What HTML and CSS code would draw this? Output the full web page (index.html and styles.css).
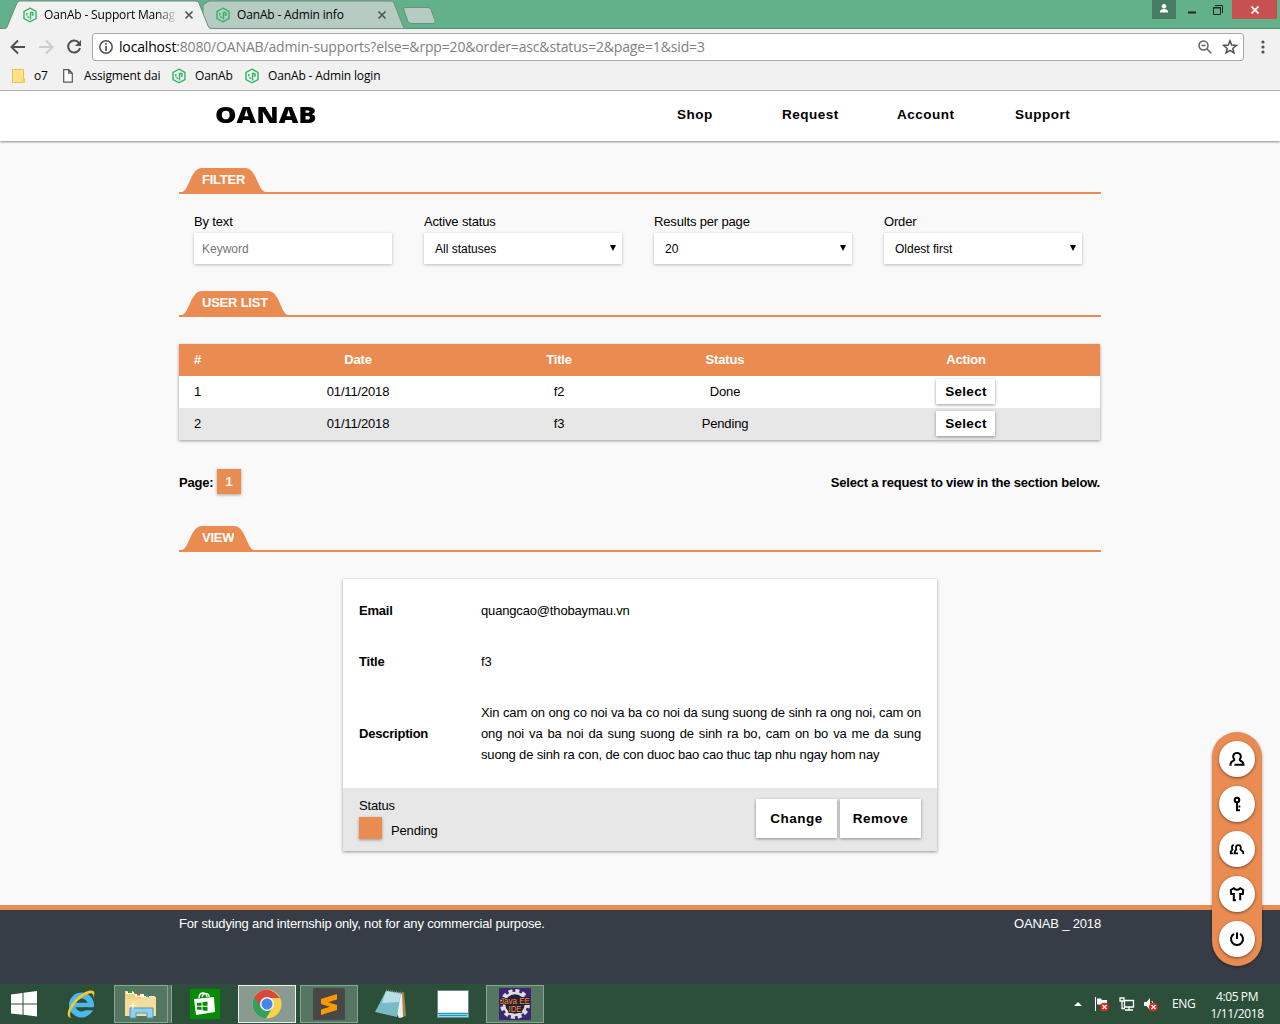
FILE: index.html
```html
<!DOCTYPE html>
<html lang="en">
<head>
<meta charset="utf-8">
<title>OanAb - Support Manager</title>
<link rel="stylesheet" href="styles.css">
</head>
<body>
<svg class="defs" width="0" height="0">
  <defs>
    <symbol id="logo" viewBox="0 0 16 16"><path d="M8 1.200 14 4.400v7.200L8 14.800 2 11.600V4.400Z" fill="none" stroke="#2eb563" stroke-width="1.400"/><path d="M4.800 6v2.500M5.300 9.500 7 10.800M8.500 12.500V5M8.500 5.300l2.500.5v2.200l-1.200.3" fill="none" stroke="#2eb563" stroke-width="1.400"/></symbol>
    <symbol id="close" viewBox="0 0 10 10"><path d="m1.500 1.500 7 7M8.500 1.500l-7 7" stroke="#555" stroke-width="1.700"/></symbol>
    <symbol id="cap-left" viewBox="0 0 20 24"><path d="M0 24C7.500 22 8.500 0 20 0V24Z" fill="#ea8c52"/></symbol>
    <symbol id="cap-right" viewBox="0 0 20 24"><path d="M20 24C12.500 22 11.500 0 0 0V24Z" fill="#ea8c52"/></symbol>
    <symbol id="badge" viewBox="0 0 9 9"><circle cx="4.500" cy="4.500" r="4.500" fill="#d9281e"/><path d="m2.500 2.500 4 4M6.500 2.500l-4 4" stroke="#fff" stroke-width="1.400"/></symbol>
  </defs>
</svg>

<div class="tabstrip">
  <svg class="tab-shapes" width="440" height="29" viewBox="0 0 440 29">
    <path d="M203 28.500V5l6-4h182q2 0 3 2l9 23q1 2.500 3 2.500Z" fill="#b6cbc1" stroke="#6d8f7e"/>
    <path d="M405 7.500h23q2 0 3 2l4 11q1 3-2 3h-21q-3 0-4-2l-4-11q-1-3 1-3Z" fill="#b6cbc1" stroke="#6d8f7e"/>
    <path d="M0 29h5q2 0 3-3L17 3q1-2 3-2h175q3 0 4 2l9 23q1 3 4 3Z" fill="#f1f1f1"/>
    <path d="M0 28.500h4q2 0 3-2L17 3q1-2 3-2h175q3 0 4 2l9 23q1 2.500 4 2.500" fill="none" stroke="#6d8f7e"/>
  </svg>
  <div class="tab tab-active"><svg width="16" height="16"><use href="#logo"/></svg><span class="tab-title">OanAb - Support Manag</span><svg width="10" height="10"><use href="#close"/></svg></div>
  <div class="tab"><svg width="16" height="16"><use href="#logo"/></svg><span class="tab-title">OanAb - Admin info</span><svg width="10" height="10"><use href="#close"/></svg></div>
  <div class="win-buttons">
    <span class="wb wb-user"><svg width="10" height="9" viewBox="0 0 10 9"><circle cx="5" cy="2.300" r="2.200" fill="#fff"/><path d="M1 8.500V7q1-2 4-2t4 2v1.500Z" fill="#fff"/></svg></span>
    <span class="wb wb-min"><svg width="8" height="3"><path d="M0 1.500h8" stroke="#222" stroke-width="2"/></svg></span>
    <span class="wb wb-max"><svg width="10" height="10" viewBox="0 0 10 10"><path d="M.5 2.500h7v7h-7ZM0 3h8M2 .5h7.500V8" fill="none" stroke="#222"/></svg></span>
    <span class="wb wb-close"><svg width="8" height="8" viewBox="0 0 8 8"><path d="m.5.5 7 7M7.500.5l-7 7" stroke="#fff" stroke-width="1.700"/></svg></span>
  </div>
</div>

<div class="toolbar">
  <svg class="nav" width="92" height="36" viewBox="0 0 92 36">
    <path d="M25 18H12M18 11.500 11.500 18l6.500 6.500" fill="none" stroke="#505050" stroke-width="2"/>
    <path d="M39 18h13M46 11.500l6.500 6.500-6.500 6.500" fill="none" stroke="#ccc" stroke-width="2"/>
    <path d="M79 14a6 6 0 1 0 1 5" fill="none" stroke="#505050" stroke-width="2"/><path d="M81 11v6h-6Z" fill="#505050"/>
  </svg>
  <div class="omnibox">
    <svg width="14" height="14" viewBox="0 0 14 14"><circle cx="7" cy="7" r="6.200" fill="none" stroke="#505050" stroke-width="1.500"/><path d="M7 3v1.800M7 6v5" stroke="#505050" stroke-width="1.700"/></svg>
    <span class="url"><b>localhost</b>:8080/OANAB/admin-supports?else=&amp;rpp=20&amp;order=asc&amp;status=2&amp;page=1&amp;sid=3</span>
    <svg width="14" height="14" viewBox="0 0 14 14"><circle cx="5.500" cy="5.500" r="4.500" fill="none" stroke="#606060" stroke-width="1.500"/><path d="M3.500 5.500h4M9 9l4.300 4.300" stroke="#606060" stroke-width="1.600"/></svg>
    <svg class="star" width="16" height="16" viewBox="0 0 16 16"><path d="m8 1.800 1.700 4.300 4.700.3-3.600 3 1.200 4.500L8 11.400l-4 2.500 1.200-4.500-3.600-3 4.700-.3Z" fill="none" stroke="#505050" stroke-width="1.500"/></svg>
  </div>
  <svg class="menu" width="4" height="14" viewBox="0 0 4 14"><g fill="#505050"><circle cx="2" cy="2" r="1.600"/><circle cx="2" cy="7" r="1.600"/><circle cx="2" cy="12" r="1.600"/></g></svg>
</div>

<div class="bookmarks">
  <span class="bm bm1"><svg width="13" height="14" viewBox="0 0 13 14"><path d="M.5.500h11v9h1v4H.5Z" fill="#ffe28a" stroke="#e6c34f"/><path d="M10 10h2.500v3.500H9.500Z" fill="#f9d15c"/></svg><span>o7</span></span>
  <span class="bm bm2"><svg width="10" height="14" viewBox="0 0 10 14"><path d="M.7.700h5.100l3.500 3.500v9H.7ZM5.800.700v3.500h3.500" fill="#fff" stroke="#555" stroke-width="1.200"/></svg><span>Assigment dai</span></span>
  <span class="bm bm3"><svg width="16" height="16"><use href="#logo"/></svg><span>OanAb</span></span>
  <span class="bm bm4"><svg width="16" height="16"><use href="#logo"/></svg><span>OanAb - Admin login</span></span>
</div>

<header class="site-header">
  <div class="brand"><span>OANAB</span></div>
  <nav class="site-nav"><a class="n1">Shop</a><a class="n2">Request</a><a class="n3">Account</a><a class="n4">Support</a></nav>
</header>

<main class="page">
  <h2 class="section s-filter"><svg width="20" height="24"><use href="#cap-left"/></svg><span>FILTER</span><svg width="20" height="24"><use href="#cap-right"/></svg></h2>
  <div class="filters">
    <div class="filter"><div class="flabel">By text</div><div class="field input">Keyword</div></div>
    <div class="filter"><div class="flabel">Active status</div><div class="field"><span>All statuses</span><i class="arrow"></i></div></div>
    <div class="filter"><div class="flabel">Results per page</div><div class="field"><span>20</span><i class="arrow"></i></div></div>
    <div class="filter"><div class="flabel">Order</div><div class="field"><span>Oldest first</span><i class="arrow"></i></div></div>
  </div>

  <h2 class="section s-list"><svg width="20" height="24"><use href="#cap-left"/></svg><span>USER LIST</span><svg width="20" height="24"><use href="#cap-right"/></svg></h2>
  <div class="list">
    <div class="row head"><span>#</span><span>Date</span><span>Title</span><span>Status</span><span>Action</span></div>
    <div class="row"><span>1</span><span>01/11/2018</span><span>f2</span><span>Done</span><span><button class="select">Select</button></span></div>
    <div class="row alt"><span>2</span><span>01/11/2018</span><span>f3</span><span>Pending</span><span><button class="select">Select</button></span></div>
  </div>
  <div class="pager"><span class="page-label">Page:</span><span class="page-no">1</span><span class="hint">Select a request to view in the section below.</span></div>

  <h2 class="section s-view"><svg width="20" height="24"><use href="#cap-left"/></svg><span>VIEW</span><svg width="20" height="24"><use href="#cap-right"/></svg></h2>
  <div class="card">
    <div class="details">
      <b>Email</b><span class="value">quangcao@thobaymau.vn</span>
      <b>Title</b><span class="value">f3</span>
      <b>Description</b><span class="value desc">Xin cam on ong co noi va ba co noi da sung suong de sinh ra ong noi, cam on ong noi va ba noi da sung suong de sinh ra bo, cam on bo va me da sung suong de sinh ra con, de con duoc bao cao thuc tap nhu ngay hom nay</span>
    </div>
    <div class="card-bar">
      <div class="status"><div>Status</div><div class="state"><i class="swatch"></i><span>Pending</span></div></div>
      <button class="action">Change</button><button class="action">Remove</button>
    </div>
  </div>
</main>

<footer class="site-footer"><span class="purpose">For studying and internship only, not for any commercial purpose.</span><span class="year">OANAB _ 2018</span></footer>

<aside class="rail">
  <a><svg viewBox="0 0 16 16"><path d="M1.500 14.800v-1.300q0-2.500 2.500-3.500 1.800-.8 1-2C3.400 5.500 4.200 2 8 2s4.600 3.500 3 6q-.8 1.200 1 2 2.300 1 2.500 3.800H5.500"/></svg></a>
  <a><svg viewBox="0 0 16 16"><circle cx="8" cy="4" r="2.300"/><path d="M8 6v8.200h3M9.500 10.500h1.800"/></svg></a>
  <a><svg class="thin" viewBox="0 0 16 16"><path d="M4.800 4.200Q3 4.200 3 6.500q0 1.300.5 2L1.800 10.500v1.800h2.500M9.500 4.200q-2.700 0-2.500 2.800l.3 1.700-1.500 1.800v1.800H9M9.500 4.200q2.500 0 2.300 2.800l-.3 1.700 2.700 2V13"/></svg></a>
  <a><svg viewBox="0 0 16 16"><path d="M7 14.200H4.800V8H2.200L1.800 4l3-1.800q3.200 3.200 6.400 0l3 1.800-.4 4h-2.600v6.200"/></svg></a>
  <a><svg viewBox="0 0 16 16"><path d="M5 2.800a6 6 0 1 0 6 0M8 1.500v6.500"/></svg></a>
</aside>

<div class="taskbar">
  <span class="tb tb-start"><svg width="28" height="26" viewBox="0 0 28 26"><path d="M0 3.500 11.500 2v10.500H0ZM12.500 1.800 26 0v12.500H12.500ZM0 13.500h11.500v10.300L0 22.500ZM12.500 13.500H26V25.500l-13.500-1.700Z" fill="#fff"/></svg></span>
  <span class="tb tb-ie"><svg width="32" height="32" viewBox="0 0 32 32"><circle cx="16.500" cy="17" r="9.500" fill="none" stroke="#4bb8ee" stroke-width="6"/><path d="M9 17h19" stroke="#4bb8ee" stroke-width="4.500"/><path d="M19 19.300h12v3H18Z" fill="#2b4f39"/><path d="M6 30C-3 29 8 8 23 3c8-2 7 3 5 8 1-4 0-7-5-5C11 11 2 25 6 30Z" fill="#f5c829"/></svg></span>
  <span class="tb tb-files open"><svg width="34" height="30" viewBox="0 0 34 30"><path d="M1 4V2h8l2 3h7l2 2h11v20H1Z" fill="#f3d382"/><path d="M2 3h8v2H2ZM11 5h9v3h-9ZM20 7h10v4H20Z" fill="#fffbe8"/><path d="M4 2h4v2H4Z" fill="#15ad35"/><path d="M13 4.500h3v2h-3Z" fill="#d8472d"/><path d="M22 6h3v2h-3Z" fill="#2791da"/><path d="M1 10h14l2-2h15v19H1Z" fill="#f5dc97"/><path d="M6 29V19h23v10h-6v-5H12v5Z" fill="#8fcff0" stroke="#4c96c4"/><path d="M9 13v7M5.500 16.500h7" stroke="#fff"/></svg></span>
  <span class="tb-stack"></span>
  <span class="tb tb-store"><svg width="30" height="30" viewBox="0 0 30 30"><path d="M0 0h30v30H0Z" fill="#068b06"/><path d="m4 10 20-2 1 15-19 3Z" fill="#fff"/><path d="M9 9c0-6 7-7 8-1M12 8c1-5 8-4 7 0" fill="none" stroke="#fff" stroke-width="1.400"/><path d="m7 14 4.500-.6v3.300H7ZM12.500 13.200l5-.6v4.100h-5ZM7 17.700h4.500V21L7 20.500ZM12.500 17.700h5V22l-5-.7Z" fill="#068b06"/></svg></span>
  <span class="tb tb-chrome open current"><svg width="30" height="30" viewBox="0 0 30 30"><circle cx="15" cy="15" r="14.500" fill="#fad14b"/><path d="M2.300 8A14.500 14.500 0 0 0 14 29.500l6.500-11L15 15Z" fill="#34a05c"/><path d="M2.300 8Q8 0 15 .5T28 9H15l-5.500 9Z" fill="#d9483d"/><circle cx="15" cy="15" r="7" fill="#f5f5f5"/><circle cx="15" cy="15" r="5.500" fill="#4285ec"/></svg></span>
  <span class="tb tb-sublime open"><svg width="32" height="32" viewBox="0 0 32 32"><rect width="32" height="32" rx="1.500" fill="#474747"/><path d="m8 11 16-5v5.500l-9 2.800 9 2.700V22L8 27v-5.500l9-2.800-9-2.700Z" fill="#ff9800"/></svg></span>
  <span class="tb tb-note"><svg width="32" height="30" viewBox="0 0 32 30"><path d="m25 4 5-1 2 24-6 2Z" fill="#a8834f"/><path d="m12 2 16 3 1 23-4 1Z" fill="#eee"/><path d="M12 2 27 4l-4 24-22-5Z" fill="#79bac8"/><path d="M12 2 27 4l-2 9-17 1Z" fill="#b8dfe5"/><path d="m12 1 16 3" stroke="#777" stroke-width="2" stroke-dasharray="1 1"/></svg></span>
  <span class="tb tb-window"><svg width="32" height="28" viewBox="0 0 32 28"><path d="M.5.500h31v27H.5Z" fill="#fff" stroke="#6b8796"/><path d="M1 22.500h30V27H1Z" fill="#8ed9e8"/><path d="M1 23.500h30M2 25.500h28" stroke="#2793b0"/></svg></span>
  <span class="tb tb-java open"><svg width="32" height="32" viewBox="0 0 32 32"><rect width="32" height="32" fill="#3c2672"/><circle cx="16" cy="16" r="13" fill="none" stroke="#ddd" stroke-width="4" stroke-dasharray="4 2.800"/><circle cx="16" cy="16" r="11" fill="#25203a" stroke="#ddd" stroke-width="2.500"/><text x="1" y="15.500" textLength="30" lengthAdjust="spacingAndGlyphs">Java EE</text><text x="9.500" y="23.500" textLength="13" lengthAdjust="spacingAndGlyphs">IDE</text></svg></span>
  <span class="tray">
    <svg class="up" width="8" height="4" viewBox="0 0 8 4"><path d="M4 0 8 4H0Z" fill="#fff"/></svg>
    <svg class="flag" width="16" height="16" viewBox="0 0 16 16"><path d="M1.500 1v14" stroke="#fff"/><path d="M3 2.500h4l1 1.500h5v6H8L7 8.500H3Z" fill="#fff"/><use href="#badge" x="6" y="6.500" width="9" height="9"/></svg>
    <svg class="net" width="16" height="16" viewBox="0 0 16 16"><path d="M5.500 4.500h9v6.500h-9ZM10 11v2.500M6 14h8M1 2h4v3H1ZM3 5v7.500h3" fill="none" stroke="#fff" stroke-width="1.300"/></svg>
    <svg class="vol" width="16" height="16" viewBox="0 0 16 16"><path d="M1 6h2.500L7 2v12l-3.500-4H1Z" fill="#fff"/><path d="M9 5q1.500 2 0 6" fill="none" stroke="#fff"/><use href="#badge" x="6" y="6.500" width="9" height="9"/></svg>
    <span class="lang">ENG</span>
    <span class="clock"><span class="time">4:05 PM</span><span class="date">1/11/2018</span></span>
  </span>
</div>
</body>
</html>
```
FILE: styles.css
```css
* { box-sizing: border-box; }
body { margin: 0; width: 1280px; height: 1024px; overflow: hidden; position: relative; display: flex; flex-direction: column; background: #f9f9f9; color: #000; font: 13px/16px "Liberation Sans", Arial, sans-serif; letter-spacing: -.16px; }
svg { display: block; flex: none; }
.defs { position: absolute; }
b { letter-spacing: -.22px; }
button { font-family: inherit; color: #000; border: 0; background: #fff; padding: 0; }

/* Browser chrome */
.tabstrip, .toolbar, .bookmarks, .taskbar { font-family: "Open Sans", "Noto Sans", sans-serif; flex: none; }
.tabstrip { position: relative; height: 29px; background: #62b18a; display: flex; padding-left: 22px; border-bottom: 1px solid #4f8e70; }
.tab-shapes { position: absolute; left: 0; top: 0; }
.tab { position: relative; display: flex; align-items: center; height: 30px; width: 193px; font-size: 12px; letter-spacing: -.16px; }
.tab-title { width: 134px; margin: 0 6px 0 6px; white-space: nowrap; }
.tab-active .tab-title { -webkit-mask-image: linear-gradient(90deg, #000 112px, transparent 134px); mask-image: linear-gradient(90deg, #000 112px, transparent 134px); }
.win-buttons { margin-left: auto; display: flex; height: 19px; }
.wb { display: flex; justify-content: center; align-items: center; }
.wb-user { width: 24px; background: #477e63; padding-bottom: 3px; }
.wb-min { width: 32px; padding-top: 5px; }
.wb-max { width: 20px; }
.wb-close { width: 45px; background: #c75050; margin: 0 3px 0 4px; }
.toolbar { height: 36px; background: #f1f1f1; display: flex; align-items: center; }
.omnibox { width: 1152px; height: 28px; border: 1px solid #a9a9a9; border-radius: 3px; background: #fff; display: flex; align-items: center; padding: 0 5px 0 6px; font-size: 14px; }
.url { flex: 1; margin-left: 6px; color: #808080; white-space: nowrap; letter-spacing: -.16px; }
.url b { color: #000; font-weight: 400; letter-spacing: inherit; }
.star { margin-left: 10px; }
.menu { margin-left: 17px; }
.bookmarks { height: 26px; background: #f1f1f1; border-bottom: 1px solid #b5b5b5; display: flex; padding-left: 12px; font-size: 12px; line-height: 22px; letter-spacing: -.14px; }
.bm { display: flex; align-items: center; height: 22px; white-space: nowrap; }
.bm1 { width: 51px; gap: 9px; }
.bm2 { width: 108px; gap: 11px; }
.bm3 { width: 73px; gap: 8px; }
.bm4 { gap: 8px; }

/* Site header */
.site-header { flex: none; height: 50px; background: #fff; display: flex; align-items: center; box-shadow: 0 1px 2px rgba(0,0,0,.45); position: relative; }
.brand { margin-left: 214.500px; width: 462.500px; font: 800 23.500px/26px "Open Sans", sans-serif; letter-spacing: 0; padding-bottom: 5px; }
.brand span { display: inline-block; transform: scaleX(1.15); transform-origin: left; }
.site-nav { display: flex; font-size: 13.500px; font-weight: 700; letter-spacing: .5px; padding-bottom: 2px; }
.n1 { width: 105px; }
.n2 { width: 115px; }
.n3 { width: 118px; }

/* Sections */
.page { width: 922px; margin-left: 179px; flex: none; height: 764px; }
.section { height: 26px; border-bottom: 2px solid #ea8c52; display: flex; padding-left: 3px; margin: 0; font-size: 13px; letter-spacing: -.22px; line-height: 23px; color: #fff; }
.section span { background: #ea8c52; height: 24px; white-space: nowrap; }
.s-filter { margin-top: 27px; }
.s-list { margin-top: 27px; }
.s-view { margin-top: 32px; }
.filters { display: grid; grid-template-columns: repeat(4, 198px); column-gap: 32px; padding: 20px 0 0 15px; height: 70px; }
.flabel { line-height: 15px; margin-bottom: 4px; }
.field { height: 31px; background: #fff; box-shadow: 0 1px 3px rgba(0,0,0,.25); padding: 0 6px 0 11px; display: flex; align-items: center; justify-content: space-between; font-size: 12px; letter-spacing: 0; }
.input { color: #757575; padding-left: 8px; }
.arrow { border: 3.500px solid transparent; border-top: 6px solid #000; border-bottom: 0; margin-top: -1px; }
.list { width: 921px; margin-top: 27px; box-shadow: 0 1px 3px rgba(0,0,0,.4); }
.row { display: grid; grid-template-columns: 37px 284px 118px 214px 268px; height: 32px; align-items: center; text-align: center; background: #fff; }
.head { background: #ea8c52; color: #fff; font-weight: 700; }
.alt { background: #e7e7e7; }
.select { display: block; width: 59px; height: 25px; margin: 0 auto 1px 104px; padding: 0 0 1px 1px; font-size: 13.500px; font-weight: 700; letter-spacing: .3px; box-shadow: 0 1px 3px rgba(0,0,0,.4); }
.pager { display: flex; align-items: center; width: 921px; height: 25px; margin-top: 29px; font-weight: 700; line-height: 16px; letter-spacing: -.2px; }
.page-label { width: 38px; padding-top: 2px; }
.page-no { width: 24px; height: 25px; line-height: 26px; background: #ea8c52; color: #fff; text-align: center; box-shadow: 0 1px 3px rgba(0,0,0,.35); }
.hint { margin-left: auto; padding-top: 2px; }
.card { width: 594px; margin: 27px 0 0 164px; background: #fff; box-shadow: 0 1px 3px rgba(0,0,0,.4); }
.details { display: grid; grid-template-columns: 122px 440px; row-gap: 30px; padding: 21px 16px 23px; line-height: 21px; align-items: center; }
.desc { text-align: justify; }
.card-bar { height: 63px; padding: 0 16px; background: #e7e7e7; display: flex; gap: 3px; padding-top: 11px; }
.status { flex: 1; line-height: 14px; }
.state { display: flex; margin-top: 4px; gap: 9px; line-height: 27px; }
.swatch { width: 23px; height: 22px; background: #ea8c52; box-shadow: 0 1px 3px rgba(0,0,0,.35); }
.action { width: 81px; height: 39px; font-size: 13.500px; font-weight: 700; letter-spacing: .5px; box-shadow: 0 1px 3px rgba(0,0,0,.4); }
.site-footer { flex: none; height: 79px; border-top: 5px solid #ea8c52; background: #363d47; color: #fff; display: flex; justify-content: space-between; padding: 6px 179px 0; }

/* Floating shortcuts */
.rail { position: absolute; left: 1212px; top: 732px; width: 50px; height: 234px; border-radius: 25px; background: #ea8c52; box-shadow: 0 1px 3px rgba(0,0,0,.4); display: flex; flex-direction: column; align-items: center; gap: 9px; padding-top: 9px; }
.rail a { width: 36px; height: 36px; border-radius: 50%; background: #fff; box-shadow: 0 1px 3px rgba(0,0,0,.5); display: flex; align-items: center; justify-content: center; }
.rail svg { width: 16px; height: 16px; fill: none; stroke: #000; stroke-width: 2; }
.rail .thin { stroke-width: 1.800; }

/* Taskbar */
.taskbar { height: 40px; background: #2b4f39; display: flex; align-items: center; color: #fff; font-size: 12px; letter-spacing: 0; }
.tb { display: flex; align-items: center; justify-content: center; height: 38px; flex: none; }
.open { background: #557661; border: 1px solid #8ca394; }
.tb-start { width: 50px; }
.tb-ie { width: 62px; }
.tb-files { width: 54px; margin-left: 2px; }
.tb-stack { width: 4px; height: 38px; background: #557661; border-right: 1px solid #8ca394; }
.tb-store { width: 66px; }
.current { width: 58px; background: #899b90; border: 1px solid #eef2ef; }
.tb-sublime { width: 58px; margin-left: 4px; }
.tb-note { width: 64px; }
.tb-window { width: 62px; }
.tb-java { width: 58px; margin-left: 2px; }
.tb-java svg { overflow: visible; }
.tb-java text { font: 9px "Liberation Sans", sans-serif; fill: #ff8b32; stroke: #25203a; stroke-width: 2px; paint-order: stroke; }
.tray { margin-left: auto; display: flex; align-items: center; width: 206px; height: 40px; }
.flag { margin-left: 12px; }
.net { margin-left: 9px; }
.vol { margin-left: 8px; }
.lang { margin-left: 13px; width: 30px; letter-spacing: -.3px; }
.clock { display: flex; flex-direction: column; align-items: center; width: 54px; margin-left: 8px; line-height: 17px; letter-spacing: -.4px; white-space: nowrap; padding-top: 1px; }
```
